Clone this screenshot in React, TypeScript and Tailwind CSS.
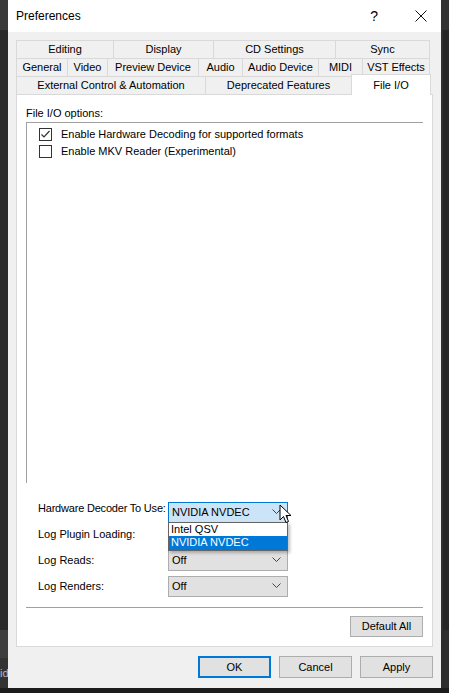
import React from 'react';

const rowOne = [
  { label: 'Editing', w: 'w-[98px]' },
  { label: 'Display', w: 'w-[100px]' },
  { label: 'CD Settings', w: 'w-[122px]' },
  { label: 'Sync', w: 'w-[94px]' },
];

const rowTwo = [
  { label: 'General', w: 'w-[52px]' },
  { label: 'Video', w: 'w-[40px]' },
  { label: 'Preview Device', w: 'w-[91px]' },
  { label: 'Audio', w: 'w-[44px]' },
  { label: 'Audio Device', w: 'w-[76px]' },
  { label: 'MIDI', w: 'w-[44px]' },
  { label: 'VST Effects', w: 'w-[67px]' },
];

function Tab({ label, w, first }: { label: string; w: string; first?: boolean }) {
  return (
    <div
      className={`${w} h-[18px] shrink-0 flex items-center justify-center whitespace-nowrap border-t border-r border-[#d9d9d9] bg-[#f0f0f0] ${first ? 'border-l' : ''}`}
    >
      {label}
    </div>
  );
}

function Chevron() {
  return (
    <svg width="9" height="6" viewBox="0 0 9 6" className="shrink-0">
      <polyline points="0.5,0.5 4.5,4.5 8.5,0.5" fill="none" stroke="#444" strokeWidth="1" />
    </svg>
  );
}

function Combo({ value }: { value?: string }) {
  return (
    <div className="w-[120px] h-[21px] border border-[#adadad] bg-[#e1e1e1] flex items-center justify-between pl-[3px] pr-[6px]">
      <span>{value}</span>
      <Chevron />
    </div>
  );
}

function Checkbox({ checked }: { checked?: boolean }) {
  return (
    <div className="w-[13px] h-[13px] border border-[#333] bg-white flex items-center justify-center shrink-0">
      {checked && (
        <svg width="11" height="11" viewBox="0 0 11 11">
          <polyline points="1.5,5.5 4,8 9.5,2" fill="none" stroke="#333" strokeWidth="1.2" />
        </svg>
      )}
    </div>
  );
}

function Button({ label, focused }: { label: string; focused?: boolean }) {
  return (
    <div
      className={`w-[73px] h-[22px] flex items-center justify-center bg-[#e1e1e1] ${focused ? 'border-2 border-[#0078d7]' : 'border border-[#adadad]'}`}
    >
      {label}
    </div>
  );
}

export default function App() {
  return (
    <div className="w-[449px] h-[693px] flex bg-[#1c1c1c] overflow-hidden font-['Liberation_Sans',Arial,sans-serif] text-[11px] text-black">
      {/* backdrop, left */}
      <div className="w-[8px] flex flex-col shrink-0">
        <div className="h-[30px] bg-[#3a3a3a]" />
        <div className="h-[600px] bg-[#2a2a2a]" />
        <div className="h-[28px] bg-[#3e3e3e]" />
        <div className="h-[30px] bg-[#333] text-[#bbb] text-[11px] leading-[30px] whitespace-nowrap">id</div>
      </div>

      <div className="w-[433px] h-[688px] flex flex-col bg-[#f0f0f0] shrink-0">
        {/* title bar */}
        <div className="h-[32px] bg-white flex items-center pl-[8px] pr-[14px] text-[12px]">
          <span className="flex-1">Preferences</span>
          <span className="text-[14px] mr-[37px]">?</span>
          <svg width="12" height="12" viewBox="0 0 12 12">
            <path d="M0.5 0.5 L11.5 11.5 M11.5 0.5 L0.5 11.5" stroke="#111" strokeWidth="1" />
          </svg>
        </div>

        {/* tab control */}
        <div className="pt-[8px] pl-[8px] flex flex-col">
          <div className="flex">
            {rowOne.map((t, i) => (
              <Tab key={t.label} label={t.label} w={t.w} first={i === 0} />
            ))}
          </div>
          <div className="flex">
            {rowTwo.map((t, i) => (
              <Tab key={t.label} label={t.label} w={t.w} first={i === 0} />
            ))}
          </div>
          <div className="flex items-end h-[18px]">
            <Tab label="External Control & Automation" w="w-[190px]" first />
            <Tab label="Deprecated Features" w="w-[146px]" />
            <div className="relative z-10 w-[80px] h-[21px] -mb-[1px] -ml-px shrink-0 bg-white border-t border-l border-r border-[#d9d9d9] flex justify-center pt-[2px]">
              File I/O
            </div>
          </div>

          {/* panel */}
          <div className="w-[417px] h-[553px] border border-[#d9d9d9] bg-white flex flex-col px-[9px]">
            <div className="pt-[11px] h-[26px] leading-[14px] mb-px">File I/O options:</div>
            <div className="h-[361px] border-t border-l border-[#a0a0a0] pl-[12px] pt-[3px] flex flex-col">
              <div className="h-[17px] flex items-center gap-[9px]">
                <Checkbox checked />
                <span>Enable Hardware Decoding for supported formats</span>
              </div>
              <div className="h-[17px] flex items-center gap-[9px]">
                <Checkbox />
                <span>Enable MKV Reader (Experimental)</span>
              </div>
            </div>

            <div className="mt-[12px] pl-[12px] flex flex-col">
              <div className="h-[26px] flex items-center">
                <span className="w-[130px] whitespace-nowrap tracking-[-0.2px]">Hardware Decoder To Use:</span>
                <div className="relative mt-[8px]">
                  <div className="w-[120px] h-[21px] border border-[#0078d7] bg-[#cce4f7] flex items-center justify-between pl-[3px] pr-[6px]">
                    <span>NVIDIA NVDEC</span>
                    <Chevron />
                  </div>
                  <div className="absolute z-20 left-0 top-[20px] w-[120px] border border-[#646464] bg-white shadow-[2px_2px_3px_rgba(0,0,0,0.25)] flex flex-col leading-[13px]">
                    <div className="h-[13px] pl-[2px]">Intel QSV</div>
                    <div className="h-[14px] pl-[2px] bg-[#0078d7] text-white">NVIDIA NVDEC</div>
                  </div>
                  <svg width="14" height="21" viewBox="0 0 14 21" className="absolute z-30 left-[111px] top-[2px]">
                    <path
                      d="M1 1 L1 16 L4.5 12.5 L7 18.5 L9.5 17.5 L7 11.5 L12 11.5 Z"
                      fill="#fff"
                      stroke="#000"
                      strokeWidth="1"
                      strokeLinejoin="round"
                    />
                  </svg>
                </div>
              </div>
              <div className="h-[26px] flex items-center">
                <span className="w-[130px] whitespace-nowrap">Log Plugin Loading:</span>
                {/* covered by the open list above */}
                <Combo />
              </div>
              <div className="h-[26px] flex items-center">
                <span className="w-[130px] whitespace-nowrap">Log Reads:</span>
                <Combo value="Off" />
              </div>
              <div className="h-[26px] flex items-center">
                <span className="w-[130px] whitespace-nowrap">Log Renders:</span>
                <Combo value="Off" />
              </div>
            </div>

            <div className="mt-[8px] h-px bg-[#a0a0a0]" />
            <div className="mt-[8px] flex justify-end">
              <div className="w-[73px] h-[21px] flex items-center justify-center bg-[#e1e1e1] border border-[#adadad]">
                Default All
              </div>
            </div>
          </div>
        </div>

        {/* dialog buttons */}
        <div className="mt-[9px] pr-[8px] flex justify-end gap-[8px]">
          <Button label="OK" focused />
          <Button label="Cancel" />
          <Button label="Apply" />
        </div>
      </div>

      {/* backdrop, right */}
      <div className="w-[8px] flex flex-col shrink-0">
        <div className="h-[30px] bg-[#333]" />
        <div className="h-[600px] bg-[#262626] border-l-2 border-[#303030]" />
        <div className="h-[58px] bg-[#2e2e2e]" />
      </div>
    </div>
  );
}
